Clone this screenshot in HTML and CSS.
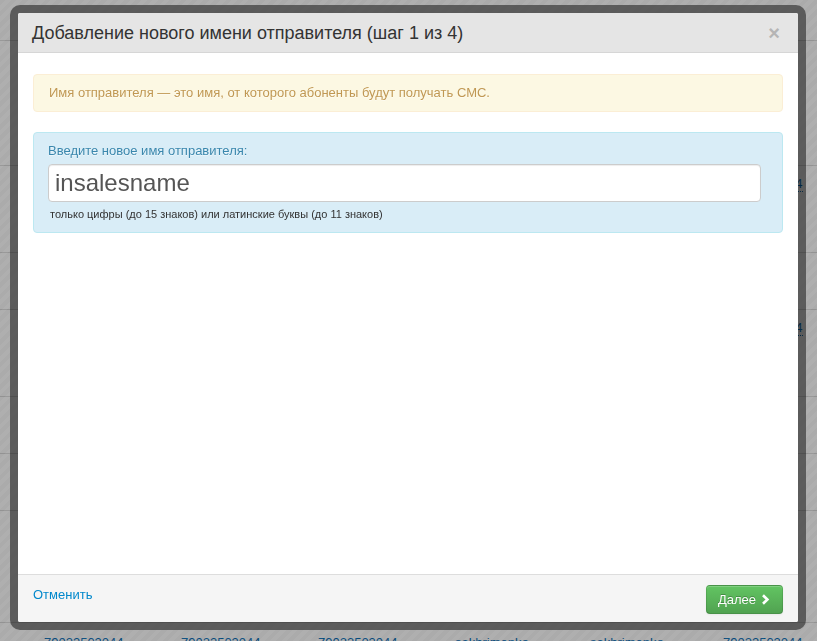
FILE: index.html
```html
<!DOCTYPE html>
<html lang="ru">
<head>
  <meta charset="UTF-8">
  <title>Имена отправителей</title>
  <link rel="stylesheet" href="styles.css">
</head>
<body>

  <!-- page under the dialog -->
  <div class="page">
    <div class="row row-head"></div>
    <div class="row row-first"></div>
    <div class="row row-tall">
      <div class="cell"><a>79023503044</a></div>
      <div class="cell"><a>79023503044</a></div>
      <div class="cell"><a>79023503044</a></div>
      <div class="cell"><a>sakhrimenko</a></div>
      <div class="cell"><a>sakhrimenko</a></div>
      <div class="cell"><a>79023503044</a></div>
    </div>
    <div class="row row-short"></div>
    <div class="row row-tall">
      <div class="cell"><a>79023503044</a></div>
      <div class="cell"><a>79023503044</a></div>
      <div class="cell"><a>79023503044</a></div>
      <div class="cell"><a>sakhrimenko</a></div>
      <div class="cell"><a>sakhrimenko</a></div>
      <div class="cell"><a>79023503044</a></div>
    </div>
    <div class="row row-short"></div>
    <div class="row row-short"></div>
    <div class="row row-wide"></div>
    <div class="row row-last">
      <div class="cell"><a>79023503044</a></div>
      <div class="cell"><a>79023503044</a></div>
      <div class="cell"><a>79023503044</a></div>
      <div class="cell"><a>sakhrimenko</a></div>
      <div class="cell"><a>sakhrimenko</a></div>
      <div class="cell"><a>79023503044</a></div>
    </div>
  </div>

  <div class="backdrop"></div>

  <!-- Add sender dialog -->
  <div class="modal">
    <div class="modal-header">
      <h3>Добавление нового имени отправителя (шаг 1 из 4)</h3>
      <button class="close">&times;</button>
    </div>

    <div class="modal-body">
      <div class="alert">Имя отправителя — это имя, от которого абоненты будут получать СМС.</div>

      <div class="alert alert-info">
        <label for="senderName">Введите новое имя отправителя:</label>
        <input type="text" id="senderName" value="insalesname">
        <div class="help">только цифры (до 15 знаков) или латинские буквы (до 11 знаков)</div>
      </div>
    </div>

    <div class="modal-footer">
      <a class="cancel" href="#">Отменить</a>
      <button class="btn-success">Далее
        <svg width="9" height="11" viewBox="0 0 9 11"><path d="M2 1.2 L6.4 5.5 L2 9.8" fill="none" stroke="#fff" stroke-width="2.6"/></svg>
      </button>
    </div>
  </div>

</body>
</html>
```

FILE: styles.css
```css
body {
  margin: 0;
  font-family: 'Liberation Sans', Arial, sans-serif;
  font-size: 13px;
  color: #333;
  background-color: #ffffff;
  overflow: hidden;
}

/* page behind the dialog */
.page {
  height: 641px;
}

.row {
  display: grid;
  grid-template-columns: 137px 137px 137px 135px 133px 1fr;
  padding-left: 36px;
  border-bottom: 1px solid #dcdcdc;
  box-sizing: border-box;
}

.row-head { height: 41px; }
.row-first { height: 125px; }
.row-tall { height: 87px; }
.row-short { height: 57px; }
.row-wide { height: 112px; }
.row-last { border-bottom: none; }

.cell {
  padding: 9px 8px 0;
  line-height: 18px;
}

.row-last .cell {
  padding-top: 11px;
}

.cell a {
  color: #0a6fb8;
  border-bottom: 1px dotted #0a6fb8;
}

.backdrop {
  position: fixed;
  top: 0;
  left: 0;
  right: 0;
  bottom: 0;
  background-color: rgba(0, 0, 0, 0.33);
  background-image: repeating-linear-gradient(135deg, rgba(255, 255, 255, 0) 0, rgba(255, 255, 255, 0) 4px, rgba(255, 255, 255, 0.05) 4px, rgba(255, 255, 255, 0.05) 8px);
}

/* dialog */
.modal {
  position: fixed;
  top: 5px;
  left: 10px;
  width: 796px;
  height: 625px;
  box-sizing: border-box;
  display: flex;
  flex-direction: column;
  background-color: #ffffff;
  background-clip: padding-box;
  border: 8px solid rgba(0, 0, 0, 0.47);
  border-radius: 10px;
}

.modal-header {
  display: flex;
  align-items: center;
  padding: 9px 15px 8px 14px;
  background-color: #e5e5e5;
  border-bottom: 1px solid #d6d6d6;
  border-radius: 2px 2px 0 0;
}

.modal-header h3 {
  flex: 1;
  margin: 0;
  font-size: 18px;
  font-weight: normal;
  line-height: 22px;
  color: #333;
}

.close {
  padding: 0;
  border: none;
  background: none;
  font-family: 'Liberation Sans', Arial, sans-serif;
  font-size: 20px;
  font-weight: bold;
  line-height: 20px;
  color: #b5b5b5;
  cursor: pointer;
  margin-right: 3px;
}

.modal-body {
  flex: 1;
  padding: 21px 15px 20px;
}

.alert {
  padding: 8px 14px 8px 15px;
  margin-bottom: 20px;
  line-height: 20px;
  color: #c09853;
  text-shadow: 0 1px 0 rgba(255, 255, 255, 0.5);
  background-color: #fcf8e3;
  border: 1px solid #fbeed5;
  border-radius: 4px;
}

.alert-info {
  padding: 9px 14px 10px 14px;
  color: #3a87ad;
  background-color: #d9edf7;
  border-color: #bce8f1;
}

.alert-info label {
  display: block;
  line-height: 18px;
  margin-bottom: 4px;
}

.alert-info input {
  display: block;
  width: 713px;
  height: 38px;
  box-sizing: border-box;
  padding: 0 6px;
  font-family: 'Liberation Sans', Arial, sans-serif;
  font-size: 24px;
  color: #555;
  background-color: #ffffff;
  border: 1px solid #cccccc;
  border-radius: 4px;
  box-shadow: inset 0 1px 1px rgba(0, 0, 0, 0.075);
  outline: none;
}

.help {
  margin-top: 4px;
  font-size: 11px;
  line-height: 16px;
  color: #333;
  padding-left: 2px;
  text-shadow: none;
}

.modal-footer {
  display: flex;
  justify-content: space-between;
  align-items: flex-start;
  padding: 10px 15px 8px;
  background-color: #f5f5f5;
  border-top: 1px solid #dddddd;
  border-radius: 0 0 2px 2px;
}

.cancel {
  color: #0088cc;
  text-decoration: none;
  line-height: 20px;
}

.btn-success {
  display: flex;
  align-items: center;
  gap: 5px;
  height: 29px;
  padding: 0 12px 0 11px;
  font-family: 'Liberation Sans', Arial, sans-serif;
  font-size: 13px;
  color: #ffffff;
  text-shadow: 0 -1px 0 rgba(0, 0, 0, 0.25);
  background-color: #5bb75b;
  background-image: linear-gradient(#62c462, #51a351);
  border: 1px solid rgba(0, 0, 0, 0.1);
  border-bottom-color: rgba(0, 0, 0, 0.25);
  border-radius: 4px;
  box-shadow: inset 0 1px 0 rgba(255, 255, 255, 0.2), 0 1px 2px rgba(0, 0, 0, 0.05);
  cursor: pointer;
}
```
